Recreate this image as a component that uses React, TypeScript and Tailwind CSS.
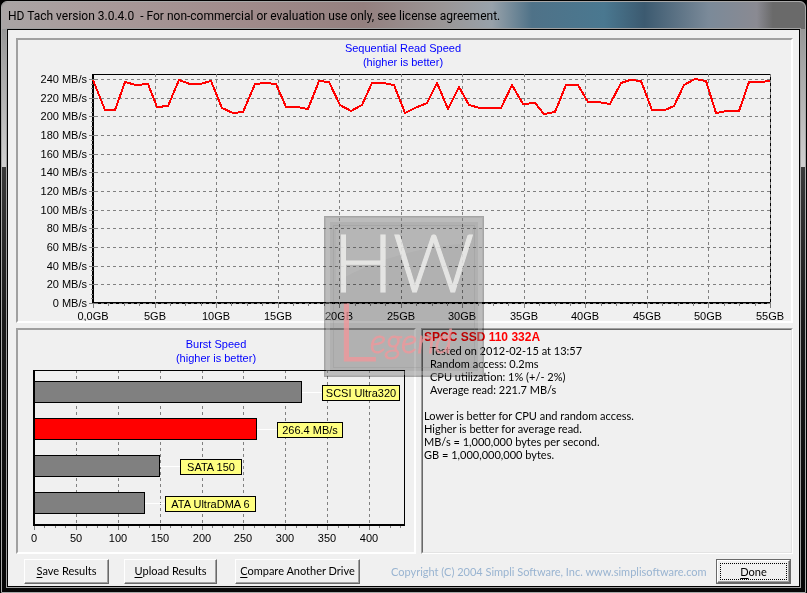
import type { ReactNode } from 'react';

const READ_POINTS =
  '93,80 105,110 115,110 125,82 136,85 148,84 157,107 168,106 179,80 190,84 200,84 211,81 222,108 233,113 243,112 255,84 266,83 ' +
  '276,84 286,107 297,107 308,109 319,81 329,82 340,105 351,111 362,105 372,83 383,83 394,85 405,113 415,108 427,103 437,83 ' +
  '448,109 459,87 469,105 480,108 501,108 512,85 523,104 535,103 544,114 555,112 566,85 578,85 588,102 598,102 610,104 621,83 ' +
  '630,80 641,81 652,110 665,110 674,106 684,85 695,79 706,81 716,113 727,111 739,111 749,82 760,82 770,81';

const BURST = [
  { label: 'SCSI Ultra320', value: 320, y: 381, color: '#808080', labelX: 322, labelW: 78 },
  { label: '266.4 MB/s', value: 266.4, y: 418, color: '#ff0000', labelX: 277, labelW: 66 },
  { label: 'SATA 150', value: 150, y: 455, color: '#808080', labelX: 180, labelW: 62 },
  { label: 'ATA UltraDMA 6', value: 133, y: 492, color: '#808080', labelX: 165, labelW: 91 },
];

const range = (n: number) => Array.from({ length: n }, (_, i) => i);

// axis scales, in chart units
const gbX = (gb: number) => Math.round(93 + (gb * 677) / 55);
const mbY = (mb: number) => Math.round(303 - (mb * 224) / 240);
const burstX = (mb: number) => Math.round(34 + mb * 0.8375);

function ReadChart() {
  return (
    <svg
      viewBox="18 40 773 281"
      className="block h-auto w-full font-['Liberation_Sans',Arial,sans-serif] text-[11px]"
      role="img"
      aria-label="Sequential Read Speed"
    >
      <g fill="#0000ff" textAnchor="middle">
        <text x="403" y="52">Sequential Read Speed</text>
        <text x="403" y="66">(higher is better)</text>
      </g>
      <g shapeRendering="crispEdges">
        <path d="M92 74h679v1h-679z M92 74h2v230h-2z M92 302h679v2h-679z M770 74h1v230h-1z" />
        <g fill="#808080">
          {range(49).map((i) => (
            <rect key={i} x={i % 4 ? 91 : 89} y={mbY(i * 5)} width={i % 4 ? 2 : 6} height="1" />
          ))}
          {range(45).map((i) => (
            <rect key={i} x={gbX(i * 1.25)} y="303" width="1" height={i % 4 ? 3 : 5} />
          ))}
        </g>
        <g stroke="#808080" strokeDasharray="3 3">
          {range(13).map((i) => (
            <line key={i} x1="95" x2="770" y1={mbY(i * 20) + 0.5} y2={mbY(i * 20) + 0.5} />
          ))}
          {range(11).map((i) => (
            <line key={i} x1={gbX(i * 5 + 5) + 0.5} x2={gbX(i * 5 + 5) + 0.5} y1="74" y2="303" />
          ))}
        </g>
        <polyline points={READ_POINTS} fill="none" stroke="#ff0000" strokeWidth="2" />
      </g>
      <g textAnchor="end">
        {range(13).map((i) => (
          <text key={i} x="87" y={mbY(i * 20) + 4}>
            {i * 20} MB/s
          </text>
        ))}
      </g>
      <g textAnchor="middle">
        {range(12).map((i) => (
          <text key={i} x={gbX(i * 5)} y="320">
            {i === 0 ? '0,0GB' : `${i * 5}GB`}
          </text>
        ))}
      </g>
    </svg>
  );
}

function BurstChart() {
  return (
    <svg
      viewBox="18 330 396 222"
      className="block h-auto w-full font-['Liberation_Sans',Arial,sans-serif] text-[11px]"
      role="img"
      aria-label="Burst Speed"
    >
      <g fill="#0000ff" textAnchor="middle">
        <text x="216" y="348">Burst Speed</text>
        <text x="216" y="362">(higher is better)</text>
      </g>
      <g shapeRendering="crispEdges">
        <g stroke="#808080" strokeDasharray="3 3">
          {range(8).map((i) => (
            <line key={i} x1={burstX(i * 50 + 50) + 0.5} x2={burstX(i * 50 + 50) + 0.5} y1="370" y2="524" />
          ))}
        </g>
        <path d="M33 370h372v1h-372z M33 370h2v156h-2z M33 524h372v2h-372z M404 370h1v156h-1z" />
        {range(36).map((i) => (
          <rect key={i} x={burstX(i * 12.5)} y="526" width="1" height={i % 4 ? 2 : 4} fill="#808080" />
        ))}
        {BURST.map((b) => (
          <g key={b.label}>
            <rect x={burstX(b.value)} y={b.y + 11} width={b.labelX - burstX(b.value)} height="1" fill="#fff" />
            <rect x="34.5" y={b.y + 0.5} width={burstX(b.value) - 35} height="21" fill={b.color} stroke="#000" />
            <rect x={b.labelX + 0.5} y={b.y + 4.5} width={b.labelW - 1} height="15" fill="#ffff80" stroke="#000" />
          </g>
        ))}
      </g>
      <g textAnchor="middle">
        {BURST.map((b) => (
          <text key={b.label} x={b.labelX + b.labelW / 2} y={b.y + 16}>
            {b.label}
          </text>
        ))}
        {range(9).map((i) => (
          <text key={i} x={burstX(i * 50)} y="542">
            {i * 50}
          </text>
        ))}
      </g>
    </svg>
  );
}

function Watermark() {
  return (
    <div className="pointer-events-none absolute inset-x-0 top-[186px] mx-auto h-[161px] w-40" aria-hidden="true">
      <div className="absolute inset-0 border border-[#b0b0b0] bg-[#bcbcbc] mix-blend-multiply" />
      <svg viewBox="0 0 160 161" className="absolute inset-0 h-full w-full overflow-visible">
        <rect x="4" y="4" width="152" height="153" fill="none" stroke="#d8d8d8" strokeOpacity=".3" strokeWidth="4" />
        <rect x="9.5" y="9.5" width="141" height="142" fill="none" stroke="#808080" strokeOpacity=".2" />
        <path d="M12 66Q70 32 148 27V12H12Z" fill="#fff" fillOpacity=".07" />
        <g
          fill="#eeeeec"
          stroke="#eeeeec"
          opacity=".85"
          className="font-[Lato,sans-serif] text-[80px] font-light"
        >
          <text x="9" y="76">H</text>
          <text x="69" y="76">W</text>
        </g>
        <g fill="#f4969a" stroke="#f4969a" opacity=".75" className="font-[Lato,sans-serif] font-light">
          <text x="12" y="145" className="text-[80px]">L</text>
          <text x="46" y="137" className="text-[34px] italic">egend</text>
        </g>
      </svg>
    </div>
  );
}

function Panel({ children }: { children: ReactNode }) {
  return (
    <div className="border-2 border-t-[#a0a0a0] border-r-white border-b-white border-l-[#a0a0a0]">
      {children}
    </div>
  );
}

function Button({ hotkey, label, className }: { hotkey: string; label: string; className: string }) {
  return (
    <button
      type="button"
      className={`h-[25px] border border-t-white border-r-[#696969] border-b-[#696969] border-l-white pb-px text-center whitespace-nowrap shadow-[inset_-1px_-1px_0_#a0a0a0] ${className}`}
    >
      <span className="underline underline-offset-2">{hotkey}</span>
      {label}
    </button>
  );
}

export default function App() {
  return (
    <div className="bg-black px-px pt-px font-[Lato,Arial,sans-serif] text-[11px] text-black">
      <div className="rounded-t-md border border-[#a8a8a8] bg-[linear-gradient(#8c8c8c,#d0d0d0_165px,#3a3a3a_165px,#1a1a1a_320px,#060606)] px-[5px] pb-[5px]">
        <header className="-mx-[5px] flex h-[27px] items-center rounded-t-md bg-[linear-gradient(90deg,#aaa5a5,#a89a9a_12%,#a08b8b_30%,#94807f_45%,#9a9696_55%,#98a2aa_61%,#4f7288_66%,#4a7890_75%,#3c5a70_80%,#7b8a99_88%,#8a8a92_94%,#6a6a6a_96%)] px-[6px]">
          <h1 className="font-[Roboto,sans-serif] text-[12px] whitespace-pre">
            {'HD Tach version 3.0.4.0  - For non-commercial or evaluation use only, see license agreement.'}
          </h1>
        </header>

        <main className="relative border border-black bg-[#f0f0f0] pt-2 pr-[6px] pb-[2px] pl-2 shadow-[0_0_0_1px_#a0a0a0]">
          <Panel>
            <ReadChart />
          </Panel>

          <div className="mt-[5px] grid grid-cols-[400fr_372fr] gap-[5px]">
            <Panel>
              <BurstChart />
            </Panel>
            <section className="border border-t-[#a0a0a0] border-r-white border-b-white border-l-[#a0a0a0]">
              <div className="h-full border border-t-[#696969] border-r-[#e3e3e3] border-b-[#e3e3e3] border-l-[#696969] px-px pt-px leading-[13px]">
                <h2 className="font-['Liberation_Sans',Arial,sans-serif] text-[12px] leading-[13px] font-bold text-[#ff0000]">
                  SPCC SSD 110 332A
                </h2>
                <ul className="pl-[6px]">
                  <li>Tested on 2012-02-15 at 13:57</li>
                  <li>Random access: 0.2ms</li>
                  <li>CPU utilization: 1% (+/- 2%)</li>
                  <li>Average read: 221.7 MB/s</li>
                </ul>
                <p className="mt-[13px]">
                  Lower is better for CPU and random access.
                  <br />
                  Higher is better for average read.
                  <br />
                  MB/s = 1,000,000 bytes per second.
                  <br />
                  GB = 1,000,000,000 bytes.
                </p>
              </div>
            </section>
          </div>

          <footer className="mt-[5px] flex items-center pr-[2px] pl-2">
            <Button hotkey="S" label="ave Results" className="w-[85px]" />
            <Button hotkey="U" label="pload Results" className="ml-[15px] w-[93px]" />
            <Button hotkey="C" label="ompare Another Drive" className="ml-[18px] w-[125px]" />
            <p className="ml-[31px] pt-0.5 whitespace-nowrap text-[#99b4d1]">
              Copyright (C) 2004 Simpli Software, Inc. www.simplisoftware.com
            </p>
            <div className="ml-auto border border-[#696969]">
              <button
                type="button"
                className="flex h-[23px] w-[73px] border border-t-white border-r-[#696969] border-b-[#696969] border-l-white p-[2px] shadow-[inset_-1px_-1px_0_#a0a0a0]"
              >
                <span className="block h-full w-full border border-dotted border-black leading-[15px]">
                  <span className="underline underline-offset-2">D</span>one
                </span>
              </button>
            </div>
          </footer>

          <Watermark />
        </main>
      </div>
    </div>
  );
}
